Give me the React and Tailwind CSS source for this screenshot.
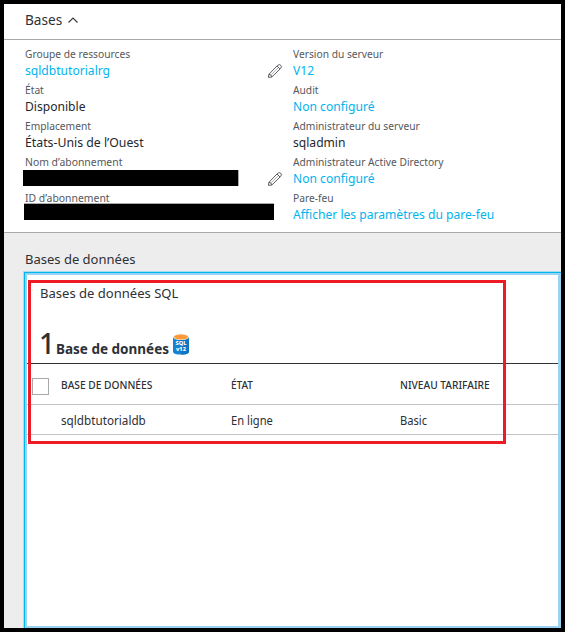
const LABEL = "h-4 whitespace-nowrap text-[11px] leading-4 text-[#55585c]";
const VALUE = "h-5 whitespace-nowrap text-[13px] leading-[17px]";
const NARROW = "inline-block origin-left scale-x-[0.93]";

function Pencil() {
  return (
    <svg className="h-4 w-4" viewBox="0 0 16 16" fill="none" stroke="#5a5d63" strokeWidth="1" strokeLinejoin="round">
      <path d="M1.4 14.4 L1.9 11.3 L10.6 2.4 Q12.3 0.9 13.8 2.3 Q15.1 3.8 13.6 5.5 L4.8 14 Z" />
      <path d="M1.9 11.3 Q4.4 11.5 4.8 14 M10 3 L13 6" />
      <path d="M4 11.9 L11.4 4.5" strokeOpacity="0.45" />
    </svg>
  );
}

function SqlIcon() {
  return (
    <svg className="h-[21px] w-4 shrink-0" viewBox="0 0 16 21">
      <path d="M0 3 V18 Q1 20.6 8 20.6 Q15 20.6 16 18 V3 Z" fill="#1683d0" />
      <path d="M8 3 H16 V18 Q15 20.6 8 20.6 Z" fill="#0d75c2" />
      <ellipse cx="8" cy="3.1" rx="8" ry="3" fill="#e7e4de" />
      <ellipse cx="8" cy="3" rx="6.8" ry="2.4" fill="#ff9933" />
      <g fill="#fff" fontFamily="'Noto Sans', sans-serif" fontWeight="800" fontSize="6" textAnchor="middle">
        <text x="8" y="11.2" textLength="11" lengthAdjust="spacingAndGlyphs">SQL</text>
        <text x="8" y="17.3" textLength="10" lengthAdjust="spacingAndGlyphs">v12</text>
      </g>
    </svg>
  );
}

function Field({ label, value, link, fit = NARROW }) {
  return (
    <div className="h-9">
      <div className={LABEL}><span className={NARROW}>{label}</span></div>
      <div className={`${VALUE} ${link ? "text-[#00b4ee]" : "text-[#24272d]"}`}><span className={fit}>{value}</span></div>
    </div>
  );
}

export default function App() {
  return (
    <div className="flex h-[632px] w-[565px] flex-col overflow-hidden border-4 border-black bg-[#ededed] font-['Noto_Sans',sans-serif] text-[#2d3036]">
      <header className="flex h-9 shrink-0 items-center border-b border-[#a9a9a9] bg-white pl-[21px]">
        <span className="-mt-[5px] w-[37px] origin-left scale-x-[0.94] text-[14.5px] leading-5">Bases</span>
        <svg className="-mt-[3px] ml-[6px] h-[6px] w-[10px]" viewBox="0 0 10 6" fill="none" stroke="#3a3d42" strokeWidth="1.2"><path d="M0.5 5.5 L5 1 L9.5 5.5" /></svg>
      </header>

      <section className="flex h-[193px] shrink-0 border-b border-[#a9a9a9] bg-white pt-[6px]">
        <div className="w-[263px] pl-[21px]">
          <Field label="Groupe de ressources" value="sqldbtutorialrg" link />
          <Field label="État" value="Disponible" />
          <Field label="Emplacement" value="États-Unis de l’Ouest" fit="inline-block origin-left scale-x-[0.945]" />
          <div className="h-9">
            <div className={LABEL}><span className="inline-block origin-left scale-x-[0.945]">Nom d’abonnement</span></div>
            <div className="-ml-[2px] h-4 w-[216px] border-r border-[#aaa] bg-black" />
          </div>
          <div className="h-9">
            <div className={LABEL}><span className="inline-block origin-left scale-x-[0.945]">ID d’abonnement</span></div>
            <div className="-ml-px -mt-[3px] h-[17px] w-[250px] border-t border-[#aaa] bg-black" />
          </div>
        </div>
        <div className="flex w-[25.5px] flex-col gap-[92px] pt-[17px]">
          <Pencil />
          <Pencil />
        </div>
        <div>
          <Field label="Version du serveur" value="V12" link />
          <Field label="Audit" value="Non configuré" link />
          <Field label="Administrateur du serveur" value="sqladmin" />
          <Field label="Administrateur Active Directory" value="Non configuré" link />
          <Field label="Pare-feu" value="Afficher les paramètres du pare-feu" link />
        </div>
      </section>

      <main className="flex min-h-0 flex-1 flex-col">
        <h2 className="h-[38px] shrink-0 pl-[21px] pt-4 text-[13px] leading-5">Bases de données</h2>
        <div className="ml-[19px] flex-1 border-l border-t border-[#aadcf0]">
          <div className="h-full border-l border-t border-[#00b6f1]">
            <div className="relative h-full border-2 border-r-[3px] border-[#99d3f1] bg-white">
              <h3 className="h-[46px] origin-left scale-x-[1.003] pl-[13px] pt-[8px] text-[13px] leading-5">Bases de données SQL</h3>
              <div className="flex h-[43px] items-end border-b border-[#303236] pb-2 pl-3">
                <span className="w-[17px] text-[28px] font-medium leading-[23px]">1</span>
                <span className="w-[117px] origin-left scale-x-[0.965] whitespace-nowrap text-[14px] font-bold leading-[13px]">Base de données</span>
                <SqlIcon />
              </div>
              <div className="grid h-[41px] grid-cols-[34px_170px_169px_1fr] items-center border-b border-[#c4c4c4] pt-[2px] text-[10px] font-medium">
                <span className="ml-[5px] mt-[3px] h-[17px] w-[17px] border border-[#a9a9a9]" />
                <span className="origin-left scale-x-[1.02]">BASE DE DONNÉES</span>
                <span>ÉTAT</span>
                <span className="origin-left scale-x-[1.02]">NIVEAU TARIFAIRE</span>
              </div>
              <div className="grid h-[30px] grid-cols-[34px_170px_169px_1fr] items-center border-b border-[#c4c4c4] pt-[3px] text-[12px]">
                <span />
                <span className="origin-left scale-x-[0.975]">sqldbtutorialdb</span>
                <span className="origin-left scale-x-[0.93]">En ligne</span>
                <span className="origin-left scale-x-[0.93]">Basic</span>
              </div>
              <div className="pointer-events-none absolute left-px top-[5px] h-[164px] w-[478px] border-[3px] border-[#ed1c24]" />
            </div>
          </div>
        </div>
      </main>
    </div>
  );
}
